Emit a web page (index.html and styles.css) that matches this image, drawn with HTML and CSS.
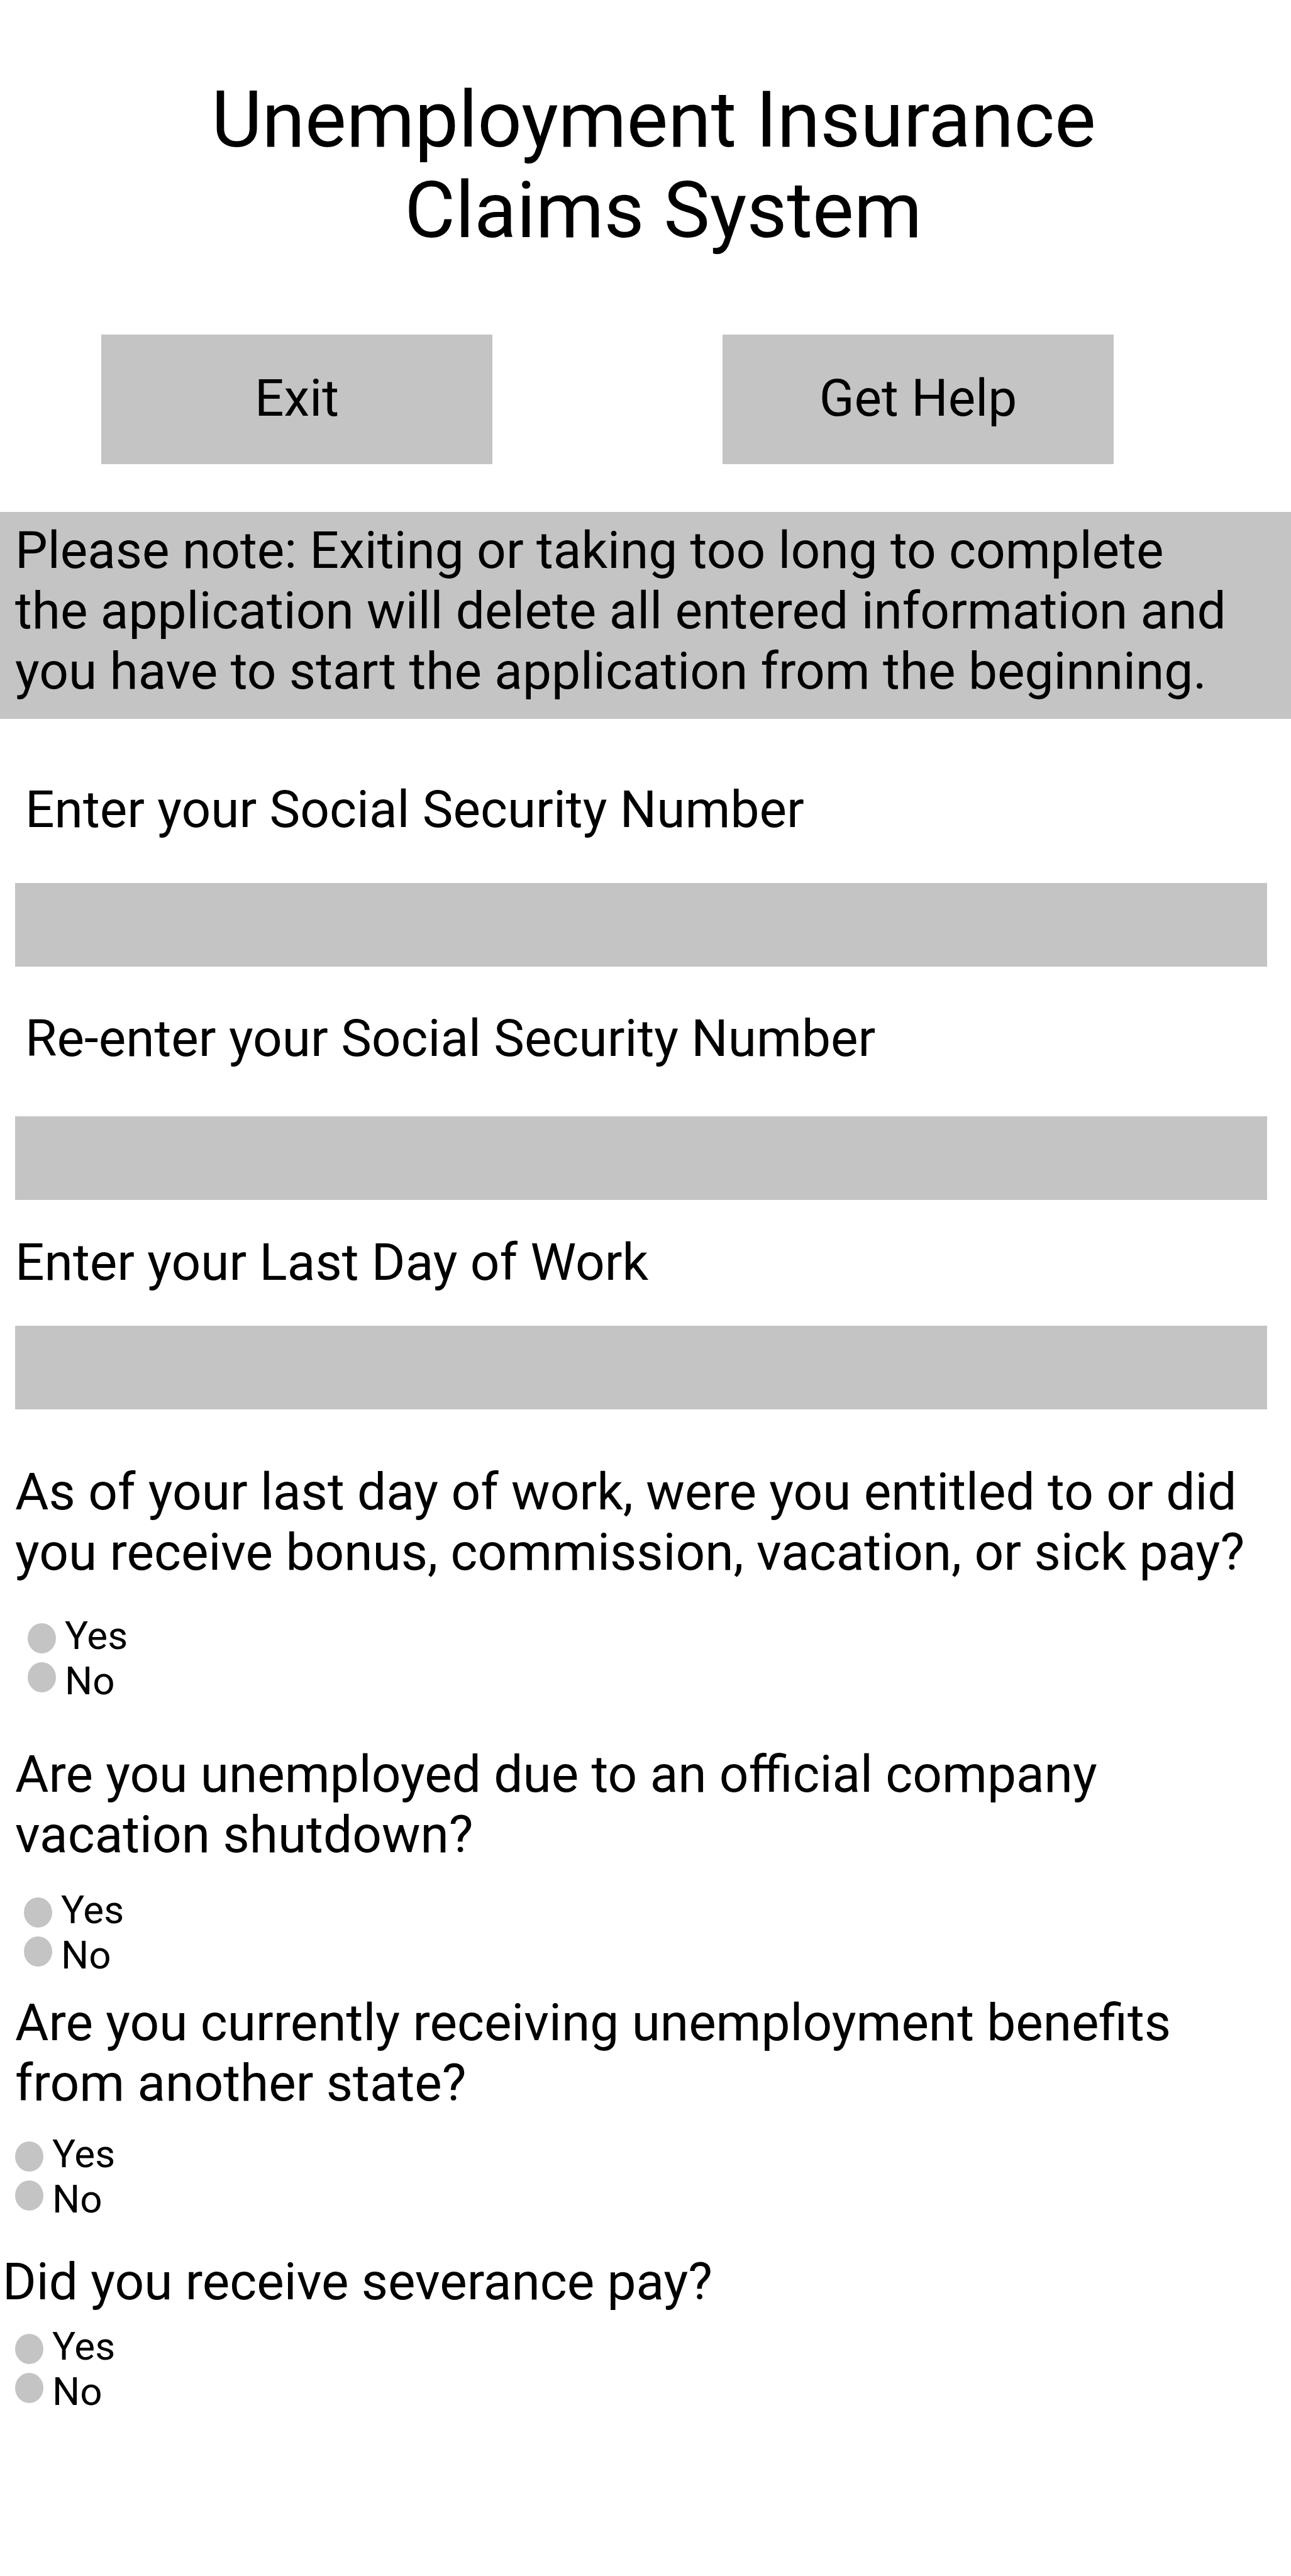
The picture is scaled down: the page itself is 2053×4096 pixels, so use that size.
FILE: index.html
```html
<!DOCTYPE html>
<html lang="en">
<head>
<meta charset="utf-8">
<meta name="viewport" content="width=device-width, initial-scale=1">
<title>Unemployment Insurance Claims System</title>
<link rel="stylesheet" href="styles.css">
</head>
<body>
<header class="header">
  <h1 class="title">Unemployment Insurance<br>&nbsp;Claims System</h1>
  <div class="actions">
    <button class="action" type="button">Exit</button>
    <button class="action" type="button">Get Help</button>
  </div>
</header>
<main>
  <p class="notice">Please note: Exiting or taking too long to complete<br>the application will delete all entered information and<br>you have to start the application from the beginning.</p>
  <form class="form">
    <div class="field field-ssn">
      <label class="field-label" for="ssn">Enter your Social Security Number</label>
      <input class="field-input" id="ssn" name="ssn" type="text">
    </div>
    <div class="field field-ssn-repeat">
      <label class="field-label" for="ssn-repeat">Re-enter your Social Security Number</label>
      <input class="field-input" id="ssn-repeat" name="ssn-repeat" type="text">
    </div>
    <div class="field field-last-day">
      <label class="field-label" for="last-day">Enter your Last Day of Work</label>
      <input class="field-input" id="last-day" name="last-day" type="text">
    </div>

    <fieldset class="question question-pay">
      <legend class="question-text">As of your last day of work, were you entitled to or did<br>you receive bonus, commission, vacation, or sick pay?</legend>
      <div class="options">
        <div class="radios">
          <input class="radio" type="radio" name="pay" id="pay-yes">
          <input class="radio" type="radio" name="pay" id="pay-no">
        </div>
        <div class="labels">
          <label for="pay-yes">Yes</label>
          <label for="pay-no">No</label>
        </div>
      </div>
    </fieldset>

    <fieldset class="question question-shutdown">
      <legend class="question-text">Are you unemployed due to an official company<br>vacation shutdown?</legend>
      <div class="options">
        <div class="radios">
          <input class="radio" type="radio" name="shutdown" id="shutdown-yes">
          <input class="radio" type="radio" name="shutdown" id="shutdown-no">
        </div>
        <div class="labels">
          <label for="shutdown-yes">Yes</label>
          <label for="shutdown-no">No</label>
        </div>
      </div>
    </fieldset>

    <fieldset class="question question-state">
      <legend class="question-text">Are you currently receiving unemployment benefits<br>from another state?</legend>
      <div class="options">
        <div class="radios">
          <input class="radio" type="radio" name="state" id="state-yes">
          <input class="radio" type="radio" name="state" id="state-no">
        </div>
        <div class="labels">
          <label for="state-yes">Yes</label>
          <label for="state-no">No</label>
        </div>
      </div>
    </fieldset>

    <fieldset class="question question-severance">
      <legend class="question-text">Did you receive severance pay?</legend>
      <div class="options">
        <div class="radios">
          <input class="radio" type="radio" name="severance" id="severance-yes">
          <input class="radio" type="radio" name="severance" id="severance-no">
        </div>
        <div class="labels">
          <label for="severance-yes">Yes</label>
          <label for="severance-no">No</label>
        </div>
      </div>
    </fieldset>
  </form>
</main>
</body>
</html>
```

FILE: styles.css
```css
:root {
  --gray: #c4c4c4;
  --edge: 24px;
}

* {
  box-sizing: border-box;
}

body {
  margin: 0;
  background: #fff;
  color: #000;
  font-family: Roboto, "Liberation Sans", sans-serif;
  font-size: 82px;
  line-height: 96px;
}

button,
input {
  font: inherit;
  color: inherit;
}

.header {
  padding-top: 119px;
}

.title {
  margin: 0;
  padding-left: 26px;
  font-size: 124px;
  font-weight: 400;
  line-height: 144px;
  text-align: center;
}

.actions {
  display: grid;
  grid-template-columns: 1fr 1fr;
  gap: 366px;
  padding: 125px 282px 76px 161px;
}

.action {
  height: 206px;
  padding: 0 0 4px;
  border: 0;
  background: var(--gray);
}

.notice {
  margin: 0;
  padding: 13px 0 28px var(--edge);
  background: var(--gray);
}

.form {
  padding: 96px 38px 0 var(--edge);
}

.field {
  display: flex;
  flex-direction: column;
}

.field-ssn {
  gap: 69px;
  margin-bottom: 66px;
}

.field-ssn-repeat {
  gap: 76px;
  margin-bottom: 51px;
}

.field-last-day {
  gap: 53px;
  margin-bottom: 83px;
}

.field-ssn .field-label,
.field-ssn-repeat .field-label {
  padding-left: 16px;
}

.field-input {
  width: 100%;
  height: 133px;
  padding: 0 24px;
  border: 0;
  border-radius: 0;
  background: var(--gray);
}

.question {
  min-width: 0;
  margin: 0;
  padding: 0;
  border: 0;
}

.question-text {
  padding: 0;
  white-space: nowrap;
}

.options {
  display: flex;
  gap: 14px;
  font-size: 62px;
  line-height: 72px;
}

.radios {
  display: flex;
  flex-direction: column;
  gap: 14px;
  padding-top: 16px;
}

.radio {
  appearance: none;
  width: 45px;
  height: 48px;
  margin: 0;
  border-radius: 50%;
  background: var(--gray);
}

.radio:checked {
  background: #000;
}

.labels {
  display: flex;
  flex-direction: column;
}

.question-pay {
  margin-bottom: 64px;
}

.question-pay .options {
  padding: 49px 0 0 20px;
}

.question-shutdown {
  margin-bottom: 23px;
}

.question-shutdown .options {
  padding: 36px 0 0 14px;
}

.question-state {
  margin-bottom: 47px;
}

.question-state .options {
  padding-top: 29px;
}

/* The last question hangs into the page margin; its options stay aligned. */
.question-severance {
  margin-left: -20px;
}

.question-severance .options {
  padding: 19px 0 0 20px;
}
```
